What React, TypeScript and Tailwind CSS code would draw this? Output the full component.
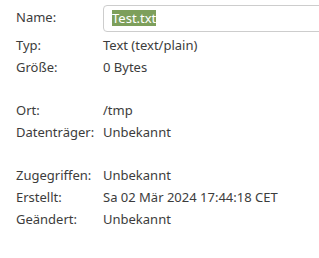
const rows1 = [
  ["Typ:", "Text (text/plain)"],
  ["Größe:", "0 Bytes"],
];
const rows2 = [
  ["Ort:", "/tmp"],
  ["Datenträger:", "Unbekannt"],
];
const rows3 = [
  ["Zugegriffen:", "Unbekannt"],
  ["Erstellt:", "Sa 02 Mär 2024 17:44:18 CET"],
  ["Geändert:", "Unbekannt"],
];

function Row({ label, value }: { label: string; value: string }) {
  return (
    <div className="flex h-[22px] items-center">
      <div className="w-[87px] shrink-0">{label}</div>
      <div className="whitespace-nowrap">{value}</div>
    </div>
  );
}

export default function App() {
  return (
    <div
      className="h-[258px] w-[319px] overflow-hidden bg-white pl-4 text-[13px] text-[#3c3c3c]"
      style={{ fontFamily: '"Noto Sans", "DejaVu Sans", sans-serif' }}
    >
      <div className="flex h-[34px] items-center pt-[2px]">
        <div className="w-[87px] shrink-0">Name:</div>
        <div className="flex h-[27px] w-[260px] shrink-0 items-center rounded-[4px] border border-[#cdcdcd] pl-2">
          <span className="bg-[#7d9f5b] leading-[16px] text-white">Test.txt</span>
        </div>
      </div>
      <div className="pt-[1px]">
        {rows1.map(([l, v]) => (
          <Row key={l} label={l} value={v} />
        ))}
      </div>
      <div className="pt-[21px]">
        {rows2.map(([l, v]) => (
          <Row key={l} label={l} value={v} />
        ))}
      </div>
      <div className="pt-[21px]">
        {rows3.map(([l, v]) => (
          <Row key={l} label={l} value={v} />
        ))}
      </div>
    </div>
  );
}
